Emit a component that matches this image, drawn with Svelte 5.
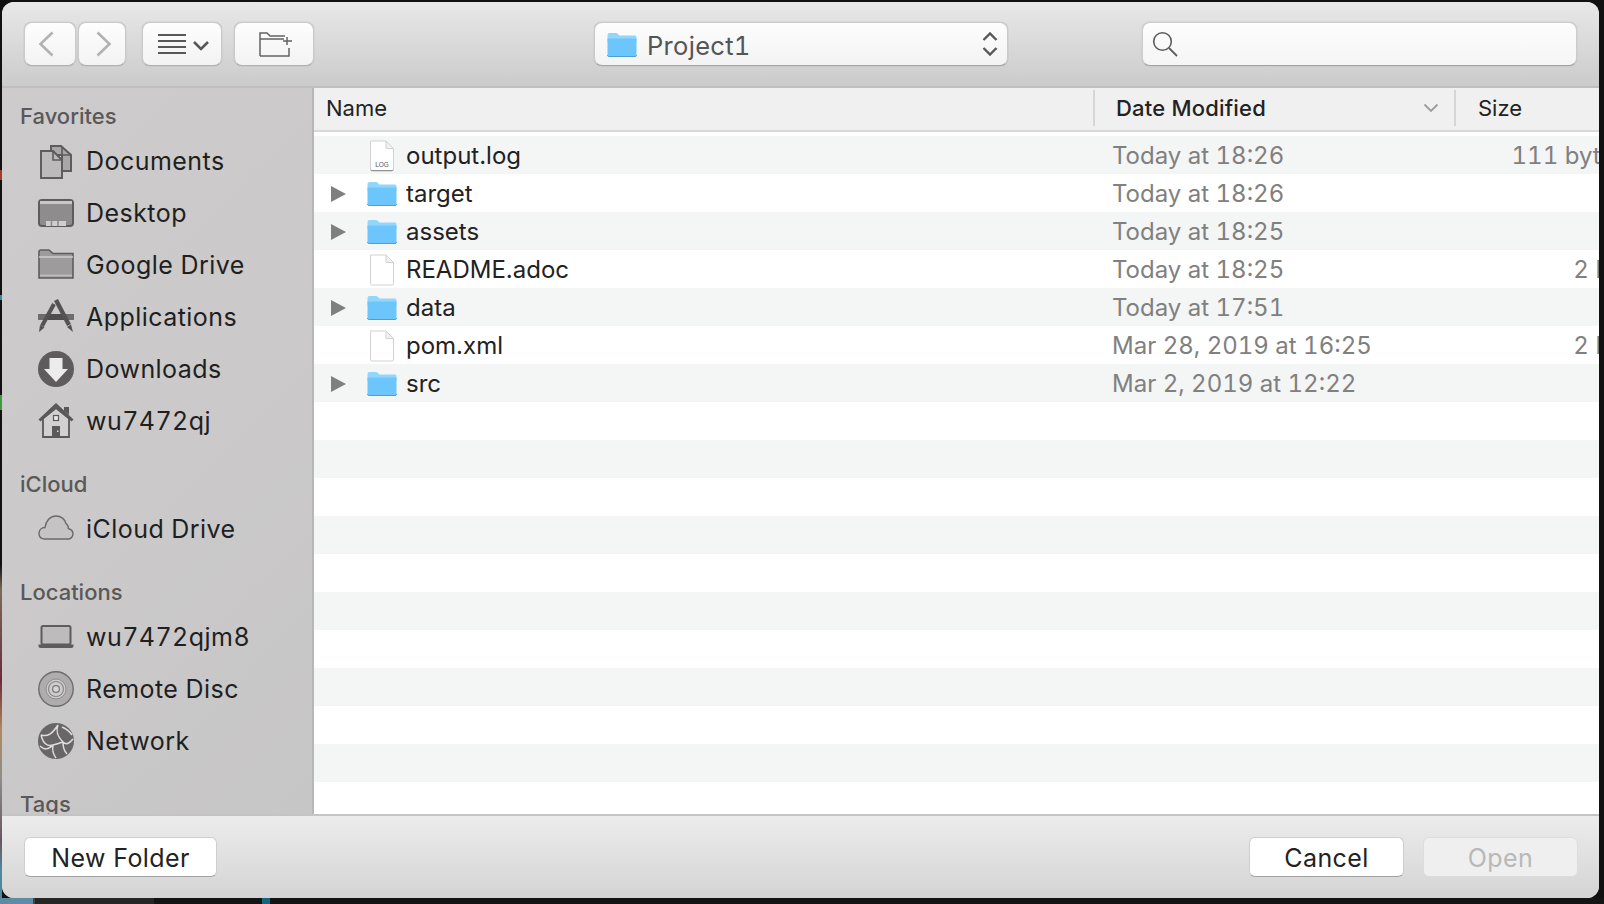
<script>
  const files = [
    { name: 'output.log', kind: 'log', date: 'Today at 18:26', size: '111 bytes' },
    { name: 'target', kind: 'folder', date: 'Today at 18:26', size: '' },
    { name: 'assets', kind: 'folder', date: 'Today at 18:25', size: '' },
    { name: 'README.adoc', kind: 'file', date: 'Today at 18:25', size: '2 KB' },
    { name: 'data', kind: 'folder', date: 'Today at 17:51', size: '' },
    { name: 'pom.xml', kind: 'file', date: 'Mar 28, 2019 at 16:25', size: '2 KB' },
    { name: 'src', kind: 'folder', date: 'Mar 2, 2019 at 12:22', size: '' }
  ];
  // empty striped rows below the listing
  const blanks = Array.from({ length: 11 }, (_, i) => i);

  const sections = [
    { title: 'Favorites', items: ['Documents', 'Desktop', 'Google Drive', 'Applications', 'Downloads', 'wu7472qj'] },
    { title: 'iCloud', items: ['iCloud Drive'] },
    { title: 'Locations', items: ['wu7472qjm8', 'Remote Disc', 'Network'] },
    { title: 'Tags', items: [] }
  ];
</script>

{#snippet folder(w, h)}
  <svg width={w} height={h} viewBox="0 0 30 25">
    <path d="M0.5 3 Q0.5 1 2.5 1 H9 Q10.5 1 11.5 2.5 L12.3 3.5 H28 Q29.5 3.5 29.5 5 V10 H0.5 Z" fill="#93d6fc" />
    <path d="M0.5 6.5 H29.5 V22.5 Q29.5 24 28 24 H2 Q0.5 24 0.5 22.5 Z" fill="#6cc6fb" />
    <path d="M0.5 23 Q0.5 24.5 2 24.5 H28 Q29.5 24.5 29.5 23" fill="none" stroke="#4e9fd2" stroke-width="1" />
  </svg>
{/snippet}

{#snippet page(isLog)}
  <svg width="26" height="32" viewBox="0 0 26 32">
    <path d="M1.5 1 H17 L24.5 8.5 V29.5 Q24.5 31 23 31 H3 Q1.5 31 1.5 29.5 Z" fill="#fff" stroke="#d2d2d2" stroke-width="1" />
    <path d="M17 1 V8.5 H24.5 Z" fill="#f1f1f1" stroke="#d2d2d2" stroke-width="1" stroke-linejoin="round" />
    {#if isLog}
      <text x="13" y="27" text-anchor="middle" class="log-label">LOG</text>
      <path d="M2 29.7 Q2 30.6 3 30.6 H23 Q24 30.6 24 29.7" fill="none" stroke="#8c8c8c" stroke-width="1" />
    {/if}
  </svg>
{/snippet}

{#snippet placeIcon(name)}
  <svg class="place-icon" width="36" height="36" viewBox="0 0 36 36">
    {#if name === 'Documents'}
      <path d="M13 3 H23 L33 12 V28 H24 V12 L13 12 Z" fill="#a9a7a7" stroke="#5e5c5c" stroke-width="2" />
      <path d="M24 4 V12 H33" fill="none" stroke="#5e5c5c" stroke-width="1.6" />
      <path d="M3 8 H15 L24 17 V35 H3 Z" fill="#bcbaba" stroke="#5e5c5c" stroke-width="2" />
      <path d="M15 8 V17 H24" fill="none" stroke="#5e5c5c" stroke-width="1.6" />
    {:else if name === 'Desktop'}
      <rect x="1" y="5" width="34" height="26" rx="3" fill="#8e8c8c" stroke="#5e5c5c" stroke-width="2" />
      <rect x="2" y="6" width="32" height="3" fill="#c9c7c7" />
      <path d="M8 31 V26 H28 V31 Z" fill="#d0cece" />
      <path d="M13.5 26 V31 M20 26 V31" stroke="#8e8c8c" stroke-width="1.6" />
    {:else if name === 'Google Drive'}
      <path d="M1 5 Q1 3 3 3 H11 L15 6.5 H35 V31 H1 Z" fill="#9d9b9b" stroke="#5e5c5c" stroke-width="1.6" />
      <path d="M1 10 H35" stroke="#d0cece" stroke-width="1.4" />
      <path d="M2 28.5 H34" stroke="#c2c0c0" stroke-width="1.6" />
    {:else if name === 'Applications'}
      <path d="M0 15 H36 V21 H0 Z" fill="#6e6c6c" />
      <path d="M9 15 H27 V21 H9 Z" fill="#4f4d4d" />
      <path d="M4 27 L16 5" stroke="#545252" stroke-width="4" />
      <path d="M1 33 L2 26 L6.5 28.5 Z" fill="#545252" />
      <path d="M18 1 L31 26" stroke="#545252" stroke-width="4.4" />
      <path d="M35 33 L29 28 L33 25.5 Z" fill="#545252" />
    {:else if name === 'Downloads'}
      <circle cx="18" cy="18" r="18" fill="#5e5c5c" />
      <path d="M11.5 7 H24.5 V18 H30 L18 31 L6 18 H11.5 Z" fill="#ececec" />
    {:else if name === 'wu7472qj'}
      <path d="M1.5 17.5 L18 2 L34.5 17.5" fill="none" stroke="#5a5858" stroke-width="3" />
      <path d="M26 4 H31 V12 L26 8 Z" fill="#5a5858" />
      <path d="M5 15.5 L18 5 L31 15.5 V34 H5 Z" fill="#d2d0d0" stroke="#5a5858" stroke-width="1.8" />
      <rect x="15.5" y="12.5" width="5" height="5" fill="#e8e8e8" stroke="#5a5858" stroke-width="1.2" />
      <rect x="14" y="23" width="8" height="11" fill="#5a5858" />
      <rect x="19" y="27.5" width="1.5" height="1.5" fill="#ddd" />
    {:else if name === 'iCloud Drive'}
      <path d="M7 28 C3 28 1 25.5 1 22.5 C1 19 3.5 16.5 7 16.5 C8 10 12 5 18 5 C23 5 26.5 8 28 12.5 C30 14 30.5 16 30.3 17.5 C33.5 18.5 35 20.5 35 23 C35 26 32.5 28 30 28 Z" fill="#c5c3c3" stroke="#6b6969" stroke-width="1.4" />
    {:else if name === 'wu7472qjm8'}
      <rect x="3.5" y="7" width="29" height="18.5" rx="1.5" fill="#bdbbbb" stroke="#5e5c5c" stroke-width="2" />
      <path d="M0.5 25.5 H35.5 V27 Q35.5 29 33.5 29 H2.5 Q0.5 29 0.5 27 Z" fill="#5e5c5c" />
    {:else if name === 'Remote Disc'}
      <circle cx="18" cy="18" r="17.2" fill="#aeacac" stroke="#6e6c6c" stroke-width="1.4" />
      <circle cx="18" cy="18" r="10" fill="#cdcbcb" stroke="#908e8e" stroke-width="1" />
      <circle cx="18" cy="18" r="7.5" fill="none" stroke="#8a8888" stroke-width="1.2" />
      <circle cx="18" cy="18" r="3.4" fill="#d8d6d6" stroke="#777" stroke-width="1.2" />
    {:else if name === 'Network'}
      <circle cx="18" cy="18" r="18" fill="#686666" />
      <path d="M3 12 C10 14 14 11 20 2 M20 2 C17 10 21 15 25 19 C28 22 31 21 35 16 M3 12 C5 20 9 24 15 22 C19 21 22 20 25 19 M15 22 C14 27 15 31 18 35 M25 19 C25 25 27 29 29 31 M2 23 C6 27 10 27 15 22 M24 4 C29 6 32 9 34 12" fill="none" stroke="#dedcdc" stroke-width="1.5" />
    {/if}
  </svg>
{/snippet}

<div class="desktop">
  <div class="window">
    <header class="toolbar">
      <button class="tb-btn back" aria-label="Back">
        <svg width="16" height="26" viewBox="0 0 16 26"><path d="M14.5 1.5 L2.5 13 L14.5 24.5" fill="none" stroke="#b2b2b2" stroke-width="2.6" /></svg>
      </button>
      <button class="tb-btn forward" aria-label="Forward">
        <svg width="16" height="26" viewBox="0 0 16 26"><path d="M1.5 1.5 L13.5 13 L1.5 24.5" fill="none" stroke="#b2b2b2" stroke-width="2.6" /></svg>
      </button>
      <button class="tb-btn view" aria-label="View">
        <svg width="54" height="22" viewBox="0 0 54 22">
          <path d="M3 2 H31 M3 8 H31 M3 14 H31 M3 20 H31" stroke="#585858" stroke-width="1.8" />
          <path d="M39 9 L46 16 L53 9" fill="none" stroke="#585858" stroke-width="2.6" />
        </svg>
      </button>
      <button class="tb-btn new-folder" aria-label="New folder">
        <svg width="36" height="26" viewBox="0 0 36 26">
          <path d="M1 25 V2 H8 L11 5 H26 M1 8 H25 M1 25 H30 V17" fill="none" stroke="#636363" stroke-width="1.5" />
          <path d="M28 6 V14 M24 10 H33" stroke="#636363" stroke-width="1.5" />
        </svg>
      </button>
      <button class="tb-btn path">
        {@render folder(30, 25)}
        <span class="path-name">Project1</span>
        <svg class="updown" width="16" height="26" viewBox="0 0 16 26">
          <path d="M1.5 9 L8 2.5 L14.5 9 M1.5 17 L8 23.5 L14.5 17" fill="none" stroke="#585858" stroke-width="2.4" />
        </svg>
      </button>
      <div class="search">
        <svg width="26" height="26" viewBox="0 0 26 26">
          <circle cx="10.5" cy="10.5" r="8.8" fill="none" stroke="#5c5c5c" stroke-width="1.6" />
          <path d="M17 17 L25 25" stroke="#5c5c5c" stroke-width="1.8" />
        </svg>
      </div>
    </header>

    <div class="main">
      <aside class="sidebar">
        {#each sections as section}
          <section class="side-section">
            <h4>{section.title}</h4>
            {#each section.items as item}
              <div class="side-item">
                {@render placeIcon(item)}
                <span>{item}</span>
              </div>
            {/each}
          </section>
        {/each}
      </aside>

      <div class="browser">
        <div class="columns">
          <div class="col col-name">Name</div>
          <div class="col col-date">
            Date Modified
            <svg class="sort" width="16" height="10" viewBox="0 0 16 10"><path d="M1.5 1.5 L8 8 L14.5 1.5" fill="none" stroke="#9c9c9c" stroke-width="1.8" /></svg>
          </div>
          <div class="col col-size">Size</div>
        </div>
        <div class="rows">
          {#each files as file}
            <div class="row">
              <div class="cell-name">
                <span class="twist">
                  {#if file.kind === 'folder'}
                    <svg width="15" height="16" viewBox="0 0 15 16"><path d="M0 0 L15 8 L0 16 Z" fill="#7f7f7f" /></svg>
                  {/if}
                </span>
                <span class="file-icon">
                  {#if file.kind === 'folder'}
                    {@render folder(30, 25)}
                  {:else}
                    {@render page(file.kind === 'log')}
                  {/if}
                </span>
                <span class="file-name">{file.name}</span>
              </div>
              <div class="cell-date">{file.date}</div>
              <div class="cell-size">{file.size}</div>
            </div>
          {/each}
          {#each blanks as b}
            <div class="row"></div>
          {/each}
        </div>
      </div>
    </div>

    <footer class="footer">
      <button class="foot-btn">New Folder</button>
      <span class="spacer"></span>
      <button class="foot-btn">Cancel</button>
      <button class="foot-btn disabled" disabled>Open</button>
    </footer>
  </div>
</div>

<style>
  :global(body) {
    margin: 0;
    background: #111;
  }

  .desktop {
    width: 1604px;
    height: 904px;
    padding: 2px 5px 6px 2px;
    box-sizing: border-box;
    overflow: hidden;
    font-family: Inter, "Noto Sans", sans-serif;
    /* bits of the wallpaper and other windows that show round the dialog */
    background:
      linear-gradient(to right, #5f8ba3 33px, #444 33px 35px, #262626 35px 154px, #141414 154px 262px, #17657c 262px 270px, #141414 270px) left bottom / 100% 6px no-repeat,
      linear-gradient(#111 170px, #a33a2c 170px 180px, #111 180px 295px, #2a8fa0 295px 300px, #111 300px 395px, #3f9a3a 395px 410px, #111 410px 565px, #7a6a58 590px, #6d2b3c 680px, #b08a5c 730px, #8c8c8c 780px, #6b5560 840px, #4d87a0 870px) left top / 2px 100% no-repeat,
      #111;
  }

  .window {
    height: 100%;
    display: flex;
    flex-direction: column;
    border-radius: 12px;
    overflow: hidden;
    background: #e0e0e0;
  }

  .toolbar {
    height: 64px;
    flex: none;
    display: flex;
    align-items: flex-start;
    padding: 20px 22px 0;
    background: linear-gradient(#e8e8e8, #cbcbcb);
    border-bottom: 2px solid #c0bfbf;
  }

  button {
    font-family: inherit;
  }

  .tb-btn {
    height: 44px;
    padding: 0;
    display: flex;
    align-items: center;
    justify-content: center;
    background: linear-gradient(#fdfdfd, #f3f3f3);
    border: 1px solid #cacaca;
    border-bottom-color: #b0b0b0;
    border-radius: 8px;
    box-sizing: border-box;
    box-shadow: 0 0 1px rgba(0, 0, 0, 0.35);
  }

  .back {
    width: 52px;
    padding-right: 9px;
  }

  .forward {
    width: 48px;
    margin-left: 2px;
    padding-left: 3px;
  }

  .view {
    width: 80px;
    margin-left: 16px;
  }

  .new-folder {
    width: 80px;
    margin-left: 12px;
    padding-left: 6px;
  }

  .path {
    width: 414px;
    margin-left: 280px;
    justify-content: flex-start;
    padding: 0 7px 0 12px;
    border-bottom-color: #a4a4a4;
  }

  .path-name {
    margin-left: 10px;
    padding-top: 2px;
    font-size: 25.5px;
    letter-spacing: 0.3px;
    font-variant-numeric: tabular-nums;
    color: #555;
  }

  .updown {
    margin-left: auto;
    margin-right: 2px;
  }

  .search {
    width: 435px;
    height: 44px;
    margin-left: auto;
    display: flex;
    align-items: center;
    padding-left: 9px;
    box-sizing: border-box;
    background: linear-gradient(#fdfdfd, #f5f5f5);
    border: 1px solid #cdcdcd;
    border-bottom-color: #a4a4a4;
    border-radius: 8px;
    box-shadow: 0 0 1px rgba(0, 0, 0, 0.35);
  }

  .main {
    flex: 1;
    min-height: 0;
    display: flex;
  }

  .sidebar {
    width: 312px;
    flex: none;
    padding: 9px 0 0 36px;
    box-sizing: border-box;
    overflow: hidden;
    background: linear-gradient(135deg, #cdcbcb, #cbc9c9 50%, #c7c6c7);
    border-right: 2px solid #b8b7b7;
  }

  .side-section {
    margin-bottom: 18px;
  }

  .side-section h4 {
    margin: 0 0 0 -18px;
    height: 38px;
    line-height: 38px;
    font-size: 22px;
    font-weight: 500;
    color: #5a5858;
  }

  .side-item {
    height: 52px;
    display: flex;
    align-items: center;
    gap: 12px;
    font-size: 25px;
    letter-spacing: 0.45px;
    font-variant-numeric: tabular-nums;
    color: #1f1f1f;
  }

  .place-icon {
    flex: none;
  }

  .browser {
    flex: 1;
    min-width: 0;
    overflow: hidden;
    background: #fff;
  }

  .columns {
    height: 44px;
    display: flex;
    align-items: center;
    padding-bottom: 2px;
    box-sizing: border-box;
    background: #f0f0f0;
    border-bottom: 2px solid #d9d9d9;
    font-size: 22px;
    color: #222;
  }

  .col {
    height: 36px;
    display: flex;
    align-items: center;
    box-sizing: border-box;
  }

  .col-name {
    width: 779px;
    padding-left: 12px;
  }

  .col-date {
    width: 363px;
    padding-left: 21px;
    font-weight: 500;
    letter-spacing: 0.2px;
    border-left: 2px solid #d6d6d6;
    border-right: 2px solid #d6d6d6;
  }

  .sort {
    margin-left: auto;
    margin-right: 15px;
  }

  .col-size {
    padding-left: 22px;
  }

  .rows {
    margin-top: 4px;
    width: 1320px;
  }

  .row {
    height: 38px;
    display: flex;
    align-items: center;
    padding-top: 1px;
    box-sizing: border-box;
    font-size: 24px;
  }

  .row:nth-child(odd) {
    background: #f4f5f5;
  }

  .cell-name {
    width: 798px;
    flex: none;
    display: flex;
    align-items: center;
    color: #222;
  }

  .twist {
    width: 53px;
    flex: none;
    padding-left: 17px;
    box-sizing: border-box;
    display: flex;
  }

  .file-icon {
    width: 39px;
    flex: none;
    display: flex;
    justify-content: center;
    padding-right: 9px;
    box-sizing: border-box;
  }

  .cell-date {
    width: 370px;
    flex: none;
    font-variant-numeric: tabular-nums;
    color: #808080;
  }

  .cell-size {
    width: 145px;
    flex: none;
    text-align: right;
    font-variant-numeric: tabular-nums;
    color: #808080;
  }

  .log-label {
    font-family: "Liberation Sans", sans-serif;
    font-size: 6.5px;
    fill: #555;
  }

  .footer {
    height: 84px;
    flex: none;
    display: flex;
    align-items: flex-start;
    gap: 19px;
    padding: 21px 21px 0 22px;
    box-sizing: border-box;
    background: linear-gradient(#ececec, #d4d4d4);
    border-top: 2px solid #c4c4c4;
  }

  .spacer {
    flex: 1;
  }

  .foot-btn {
    width: 155px;
    height: 40px;
    padding: 1px 0 0;
    background: #fff;
    border: 1px solid #cecece;
    border-bottom-color: #a2a2a2;
    border-radius: 6px;
    font-size: 25px;
    letter-spacing: 0.4px;
    color: #222;
  }

  .foot-btn:first-child {
    width: 193px;
  }

  .disabled {
    background: #efefef;
    border-color: #dcdcdc;
    color: #b8b8b8;
  }
</style>
